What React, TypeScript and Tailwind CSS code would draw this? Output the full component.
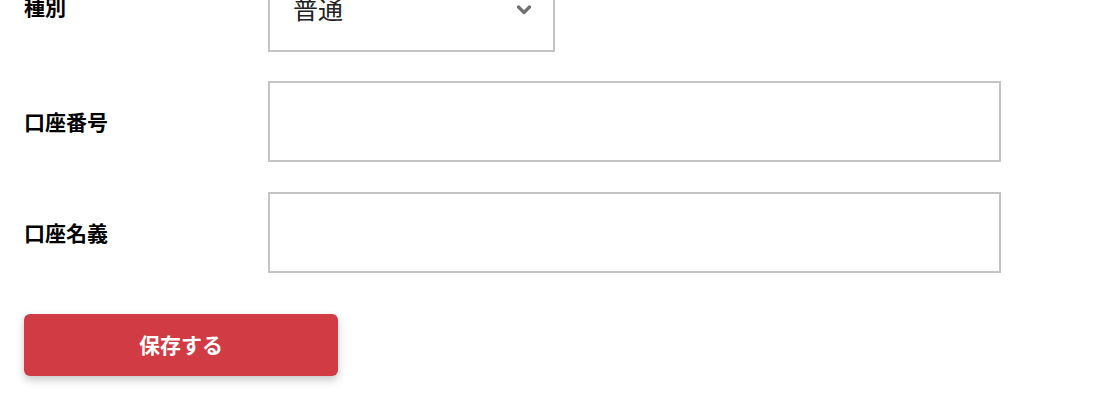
import { useState } from "react";

const fontStack = "font-['Noto_Sans_CJK_JP','Noto_Sans',sans-serif]";

function Row({
  label,
  labelClass = "",
  children,
}: {
  label: string;
  labelClass?: string;
  children: React.ReactNode;
}) {
  return (
    <div className="flex items-center">
      <label className={`w-[244px] shrink-0 text-[21px] font-bold text-black leading-none ${labelClass}`}>{label}</label>
      {children}
    </div>
  );
}

export default function App() {
  const [kind, setKind] = useState("普通");
  const [number, setNumber] = useState("");
  const [holder, setHolder] = useState("");

  return (
    <div className={`min-h-screen bg-white overflow-hidden ${fontStack}`}>
      <div className="-mt-[30px] px-6 flex flex-col">
        {/* 種別 */}
        <Row label="種別" labelClass="-mt-[10px]">
          <div className="relative w-[287px] h-[82px]">
            <select
              value={kind}
              onChange={(e) => setKind(e.target.value)}
              className="appearance-none w-full h-full border-2 border-[#c4c4c4] bg-white pl-[23px] pr-10 pb-[4px] text-[25px] text-[#222] outline-none"
            >
              <option>普通</option>
              <option>当座</option>
            </select>
            <svg
              className="absolute right-[24px] top-[35px] pointer-events-none"
              width="14"
              height="10"
              viewBox="0 0 14 10"
            >
              <path d="M1.5 2 L7 7.5 L12.5 2" fill="none" stroke="#717171" strokeWidth="3.2" strokeLinecap="round" strokeLinejoin="round" />
            </svg>
          </div>
        </Row>

        <div className="mt-[29px]">
          <Row label="口座番号">
            <input
              value={number}
              onChange={(e) => setNumber(e.target.value)}
              className="w-[733px] h-[81px] border-2 border-[#c4c4c4] bg-white px-4 text-[20px] outline-none"
            />
          </Row>
        </div>

        <div className="mt-[30px]">
          <Row label="口座名義">
            <input
              value={holder}
              onChange={(e) => setHolder(e.target.value)}
              className="w-[733px] h-[81px] border-2 border-[#c4c4c4] bg-white px-4 text-[20px] outline-none"
            />
          </Row>
        </div>

        <div className="mt-[41px]">
          <button className="w-[314px] h-[62px] rounded-[6px] bg-[#d13b43] text-white text-[21px] font-bold shadow-[0_4px_8px_rgba(0,0,0,0.22)]">
            保存する
          </button>
        </div>
      </div>
    </div>
  );
}
